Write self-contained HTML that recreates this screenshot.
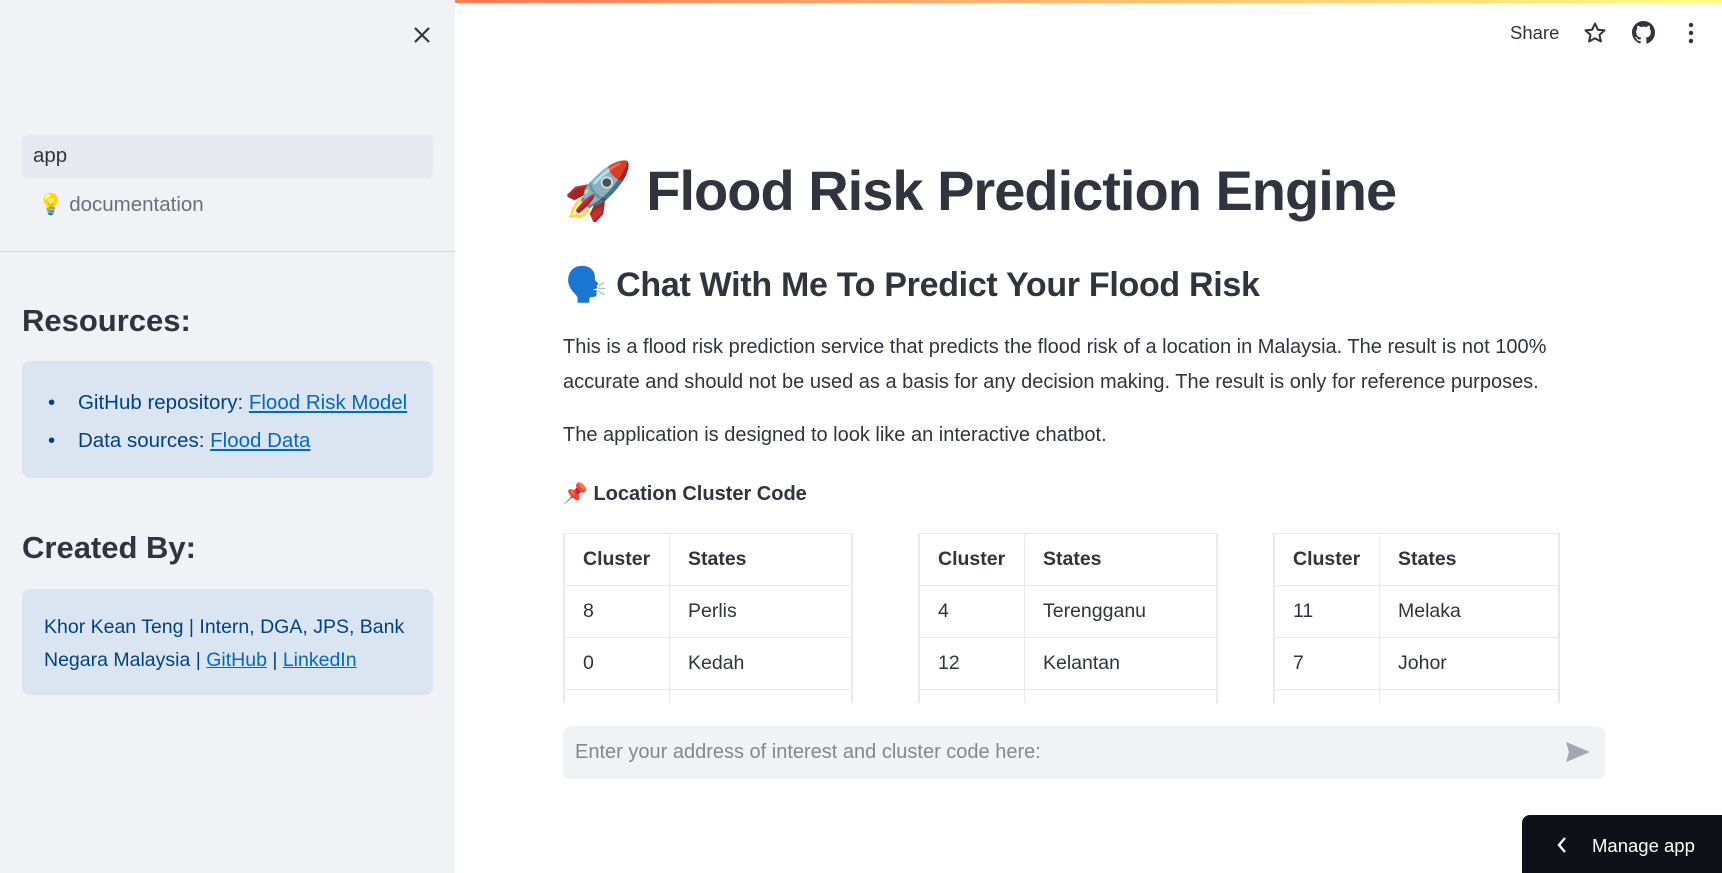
<!DOCTYPE html>
<html><head><meta charset="utf-8"><style>
*{box-sizing:border-box;margin:0;padding:0}
body{width:1722px;height:873px;overflow:hidden;background:#fff;font-family:"Liberation Sans",sans-serif;color:#31333f;position:relative}
.bar{position:absolute;top:0;left:0;width:1722px;height:3px;background:linear-gradient(90deg,#ff4b4b,#fffd80)}
.side{position:absolute;left:0;top:0;width:455px;height:873px;background:#f0f2f6}
.abs{position:absolute}
.info{position:absolute;left:22px;width:411px;background:#dbe5f1;border-radius:8px;color:#004280;font-size:20.5px}
a{color:#0068c9;text-decoration:underline}
.tbl{position:absolute;top:533px;height:170px;overflow:hidden;border-left:1px solid #e6e9ef;border-right:1px solid #e6e9ef}
.tbl table{border-collapse:collapse;font-size:19.5px;width:100%}
.tbl td,.tbl th{border:1px solid #e6e9ef;height:52px;padding:0 18px;text-align:left}
.tbl th{font-weight:bold}
</style></head><body>
<div class="bar"></div>
<div class="side">
 <svg class="abs" style="left:412px;top:25px" width="20" height="20" viewBox="0 0 20 20"><path d="M3 3L17 17M17 3L3 17" stroke="#31333f" stroke-width="2.2"/></svg>
 <div class="abs" style="left:22px;top:135px;width:411px;height:43px;background:#e6e9ef;border-radius:6px;font-size:20.5px;padding:9px 11px">app</div>
 <div class="abs" style="left:38px;top:193px;font-size:20.5px;color:#6d6f78">💡 documentation</div>
 <div class="abs" style="left:0;top:251px;width:455px;height:1px;background:#d5d7dd"></div>
 <div class="abs" style="left:22px;top:303px;font-size:31px;font-weight:bold">Resources:</div>
 <div class="info" style="top:361px;height:117px">
  <div class="abs" style="left:26px;top:30px">•&nbsp;&nbsp;&nbsp;&nbsp;GitHub repository: <a>Flood Risk Model</a></div>
  <div class="abs" style="left:26px;top:68px">•&nbsp;&nbsp;&nbsp;&nbsp;Data sources: <a>Flood Data</a></div>
 </div>
 <div class="abs" style="left:22px;top:530px;font-size:31px;font-weight:bold">Created By:</div>
 <div class="info" style="top:589px;height:106px;padding:22px 12px 0 22px;line-height:33px;font-size:19.5px;white-space:nowrap">Khor Kean Teng | Intern, DGA, JPS, Bank<br>Negara Malaysia | <a>GitHub</a> | <a>LinkedIn</a></div>
</div>
<div class="abs" style="left:1510px;top:22px;font-size:18.5px">Share</div>
<svg class="abs" style="left:1583px;top:21px" width="24" height="24" viewBox="0 0 24 24"><path d="M12 2.5l2.9 6.2 6.6.7-5 4.5 1.4 6.6L12 17.2l-5.9 3.3 1.4-6.6-5-4.5 6.6-.7z" fill="none" stroke="#31333f" stroke-width="2" stroke-linejoin="round"/></svg>
<svg class="abs" style="left:1632px;top:21px" width="23" height="23" viewBox="0 0 16 16"><path fill="#31333f" d="M8 0C3.58 0 0 3.58 0 8c0 3.540 2.290 6.530 5.470 7.590.4.07.55-.17.55-.38v-1.33c-2.23.48-2.7-1.07-2.7-1.07-.36-.92-.89-1.170-.89-1.17-.73-.5.06-.49.06-.49.8.06 1.23.83 1.23.83.71 1.22 1.87.87 2.33.66.07-.52.28-.87.5-1.07-1.78-.2-3.65-.89-3.65-3.95 0-.87.31-1.59.82-2.15-.08-.2-.36-1.02.08-2.12 0 0 .67-.21 2.2.82a7.6 7.6 0 0 1 4 0c1.53-1.04 2.2-.82 2.2-.82.44 1.1.16 1.92.08 2.12.51.56.82 1.27.82 2.15 0 3.07-1.87 3.75-3.65 3.95.29.25.54.73.54 1.48v2.2c0 .21.15.46.55.38A8 8 0 0 0 16 8c0-4.42-3.58-8-8-8z"/></svg>
<svg class="abs" style="left:1688px;top:22px" width="6" height="22"><circle cx="3" cy="3" r="2.2" fill="#31333f"/><circle cx="3" cy="11" r="2.2" fill="#31333f"/><circle cx="3" cy="19" r="2.2" fill="#31333f"/></svg>

<div class="abs" style="left:563px;top:158px;font-size:56px;font-weight:bold;white-space:nowrap;letter-spacing:-1px">🚀 Flood Risk Prediction Engine</div>
<div class="abs" style="left:565px;top:265px;font-size:34px;font-weight:bold;white-space:nowrap;letter-spacing:-0.3px">🗣️ Chat With Me To Predict Your Flood Risk</div>
<div class="abs" style="left:563px;top:330px;width:1015px;font-size:20px;line-height:35px">This is a flood risk prediction service that predicts the flood risk of a location in Malaysia. The result is not 100% accurate and should not be used as a basis for any decision making. The result is only for reference purposes.</div>
<div class="abs" style="left:563px;top:424px;font-size:20px">The application is designed to look like an interactive chatbot.</div>
<div class="abs" style="left:563px;top:481px;font-size:20px;font-weight:bold">📌 Location Cluster Code</div>

<div class="tbl" style="left:563px;width:290px"><table><tr><th style="width:105px">Cluster</th><th>States</th></tr><tr><td>8</td><td>Perlis</td></tr><tr><td>0</td><td>Kedah</td></tr><tr><td></td><td></td></tr></table></div>
<div class="tbl" style="left:918px;width:300px"><table><tr><th style="width:105px">Cluster</th><th>States</th></tr><tr><td>4</td><td>Terengganu</td></tr><tr><td>12</td><td>Kelantan</td></tr><tr><td></td><td></td></tr></table></div>
<div class="tbl" style="left:1273px;width:287px"><table><tr><th style="width:105px">Cluster</th><th>States</th></tr><tr><td>11</td><td>Melaka</td></tr><tr><td>7</td><td>Johor</td></tr><tr><td></td><td></td></tr></table></div>

<div class="abs" style="left:563px;top:726px;width:1042px;height:53px;background:#f0f2f6;border-radius:8px;font-size:20px;color:#85878f;padding:15px 12px">Enter your address of interest and cluster code here:</div>
<svg class="abs" style="left:1565px;top:741px" width="26" height="22" viewBox="0 0 26 22"><path d="M1 1L25 11L1 21L4 11Z" fill="#a3a8b4"/></svg>

<div class="abs" style="left:1522px;top:815px;width:200px;height:58px;background:#0e1117;border-radius:8px 0 0 0;color:#fff;font-size:18.5px;padding:20px 0 0 70px">Manage app</div>
<svg class="abs" style="left:1556px;top:836px" width="12" height="18"><path d="M9 2L3 9L9 16" stroke="#fff" stroke-width="2.4" fill="none"/></svg>
</body></html>
